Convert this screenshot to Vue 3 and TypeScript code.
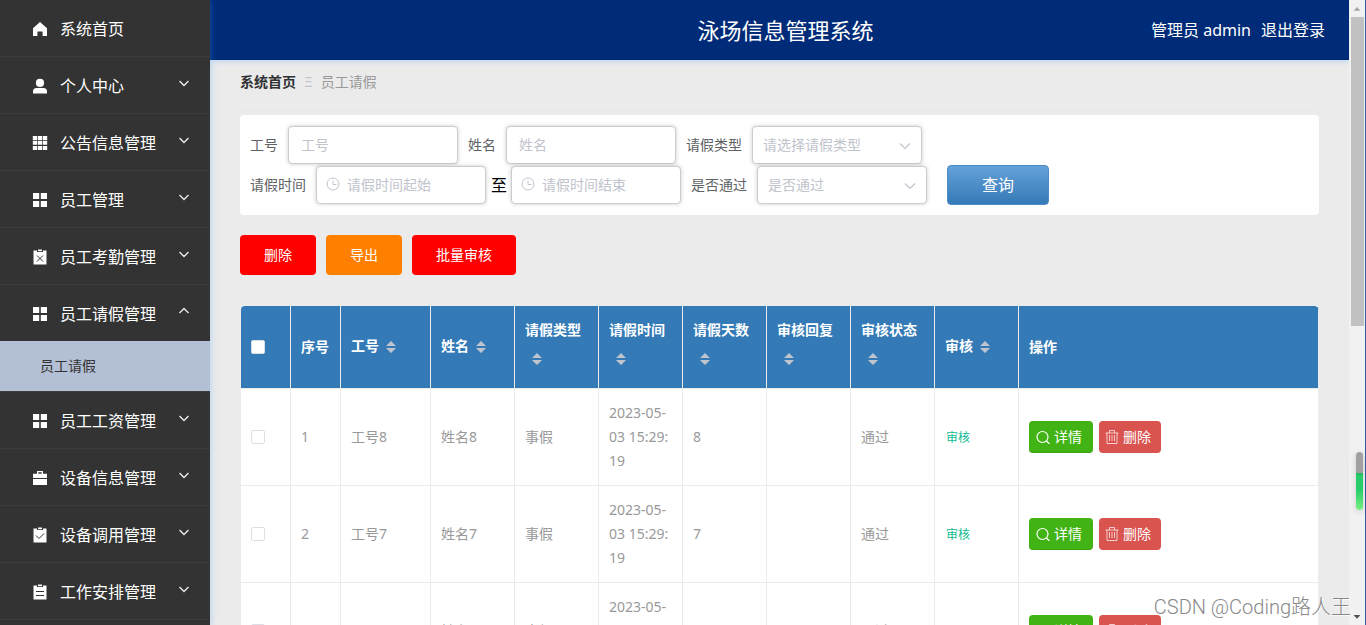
<script setup lang="ts">
import { ref } from 'vue'

type IconName = 'home' | 'user' | 'grid9' | 'grid4' | 'claim' | 'case' | 'checked' | 'order'

interface MenuItem {
  title: string
  icon: IconName
  expandable: boolean
  children?: string[]
}

interface Column {
  label: string
  width: number
}

interface Leave {
  no: string
  name: string
  type: string
  time: string
  days: string
  reply: string
  status: string
}

const menu: MenuItem[] = [
  { title: '系统首页', icon: 'home', expandable: false },
  { title: '个人中心', icon: 'user', expandable: true },
  { title: '公告信息管理', icon: 'grid9', expandable: true },
  { title: '员工管理', icon: 'grid4', expandable: true },
  { title: '员工考勤管理', icon: 'claim', expandable: true },
  { title: '员工请假管理', icon: 'grid4', expandable: true, children: ['员工请假'] },
  { title: '员工工资管理', icon: 'grid4', expandable: true },
  { title: '设备信息管理', icon: 'case', expandable: true },
  { title: '设备调用管理', icon: 'checked', expandable: true },
  { title: '工作安排管理', icon: 'order', expandable: true }
]

const icons: Record<IconName, string> = {
  home: 'M8 1 15 7.2V15h-4.4v-4.6H5.4V15H1V7.2z',
  user: 'M8 .8a4.100 4.100 0 1 1 0 8.200A4.100 4.100 0 0 1 8 .8zM4.500 10h7A3.500 3.500 0 0 1 15 13.500V15.500H1v-2A3.500 3.500 0 0 1 4.500 10z',
  grid9: 'M.8 1h4.400v4H.8zM5.900 1h4.200v4H5.900zM10.800 1h4.400v4h-4.400zM.8 5.700h4.400v4H.8zM5.900 5.700h4.200v4H5.900zM10.800 5.700h4.400v4h-4.400zM.8 10.900h4.400v4.100H.8zM5.900 10.900h4.200v4.100H5.900zM10.800 10.900h4.400v4.100h-4.400z',
  grid4: 'M1 1h6.200v6H1zM8.800 1H15v6H8.800zM1 9h6.200v6H1zM8.800 9H15v6H8.800z',
  claim: 'M1.500 1.500H5V3h6V1.500h3.500v14h-13zM6 .5h4v1.800H6z',
  case: 'M5 3.800V1h6v2.800h4V8H1V3.800zM6.300 2.200v1.600h3.400V2.200zM1 9h14v6H1z',
  checked: 'M1.500 1.500H5V3h6V1.500h3.500v14h-13zM6 .5h4v1.800H6z',
  order: 'M1.500 1.500H5V3h6V1.500h3.500v14h-13zM6 .5h4v1.800H6z'
}

const marks: Partial<Record<IconName, string>> = {
  claim: 'M5 6.500l6 6M11 6.500l-6 6',
  checked: 'M4 8.500l3 3L12 6.500',
  order: 'M4 7.500h8M4 11.500h8'
}

const columns: Column[] = [
  { label: '工号', width: 90 },
  { label: '姓名', width: 84 },
  { label: '请假类型', width: 84 },
  { label: '请假时间', width: 84 },
  { label: '请假天数', width: 84 },
  { label: '审核回复', width: 84 },
  { label: '审核状态', width: 84 },
  { label: '审核', width: 84 }
]

const rows: Leave[] = ['8', '7', '6'].map((n) => ({
  no: '工号' + n,
  name: '姓名' + n,
  type: '事假',
  time: '2023-05-03 15:29:19',
  days: n,
  reply: '',
  status: '通过'
}))

const jobNo = ref('')
const staffName = ref('')
const startTime = ref('')
const endTime = ref('')
const leaveType = ref('')
const passed = ref('')
</script>

<template>
  <div class="app">
    <nav class="sidebar">
      <ul class="menu">
        <li v-for="item in menu" :key="item.title" class="menu-item">
          <a href="#" class="menu-title">
            <svg class="menu-icon" viewBox="0 0 16 16">
              <path :d="icons[item.icon]" fill="#fff" fill-rule="evenodd" />
              <path v-if="marks[item.icon]" :d="marks[item.icon]" fill="none" stroke="#333" />
            </svg>
            <span class="menu-text">{{ item.title }}</span>
            <svg v-if="item.expandable" class="arrow" :class="{ open: item.children }" viewBox="0 0 12 12">
              <path d="M1.500 4 6 8.500l4.500-4.500" fill="none" stroke="#eee" stroke-width="1.300" />
            </svg>
          </a>
          <a v-for="child in item.children" :key="child" href="#" class="submenu">{{ child }}</a>
        </li>
      </ul>
    </nav>

    <div class="page">
      <header class="header">
        <h1>泳场信息管理系统</h1>
        <div class="account">
          <span>管理员 admin</span>
          <a href="#">退出登录</a>
        </div>
      </header>

      <main class="content">
        <div class="crumbs">
          <a href="#">系统首页</a>
          <span class="sep">Ξ</span>
          <span>员工请假</span>
        </div>

        <form class="search" @submit.prevent>
          <div class="field">
            <label for="job-no">工号</label>
            <input id="job-no" v-model="jobNo" class="box" type="text" placeholder="工号" />
          </div>
          <div class="field">
            <label for="staff-name">姓名</label>
            <input id="staff-name" v-model="staffName" class="box" type="text" placeholder="姓名" />
          </div>
          <div class="field">
            <label for="leave-type">请假类型</label>
            <div class="control">
              <select id="leave-type" v-model="leaveType" class="box">
                <option value="">请选择请假类型</option>
              </select>
              <svg class="caret" viewBox="0 0 12 12"><path d="M1 3.500 6 8.500l5-5" fill="none" stroke="#c0c4cc" stroke-width="1.200" /></svg>
            </div>
          </div>
          <div class="field">
            <label for="start-time">请假时间</label>
            <div class="range">
              <div class="control">
                <svg class="clock" viewBox="0 0 14 14"><path d="M7 1a6 6 0 1 1 0 12A6 6 0 0 1 7 1zM7 3.500V7.500h3.500" fill="none" stroke="#c0c4cc" /></svg>
                <input id="start-time" v-model="startTime" class="box dated" type="text" placeholder="请假时间起始" />
              </div>
              <span class="to">至</span>
              <div class="control">
                <svg class="clock" viewBox="0 0 14 14"><path d="M7 1a6 6 0 1 1 0 12A6 6 0 0 1 7 1zM7 3.500V7.500h3.500" fill="none" stroke="#c0c4cc" /></svg>
                <input v-model="endTime" class="box dated" type="text" placeholder="请假时间结束" aria-label="请假时间结束" />
              </div>
            </div>
          </div>
          <div class="field">
            <label for="passed">是否通过</label>
            <div class="control">
              <select id="passed" v-model="passed" class="box">
                <option value="">是否通过</option>
              </select>
              <svg class="caret" viewBox="0 0 12 12"><path d="M1 3.500 6 8.500l5-5" fill="none" stroke="#c0c4cc" stroke-width="1.200" /></svg>
            </div>
          </div>
          <button class="query" type="submit">查询</button>
        </form>

        <div class="actions">
          <button type="button" class="action red">删除</button>
          <button type="button" class="action orange">导出</button>
          <button type="button" class="action red">批量审核</button>
        </div>

        <table class="table">
          <colgroup>
            <col class="narrow" />
            <col class="narrow" />
            <col v-for="c in columns" :key="c.label" :style="{ width: c.width + 'px' }" />
            <col />
          </colgroup>
          <thead>
            <tr>
              <th><input type="checkbox" class="check" aria-label="全选" /></th>
              <th>序号</th>
              <th v-for="c in columns" :key="c.label">
                <span class="label">{{ c.label }}</span>
                <span class="sort">
                  <svg viewBox="0 0 10 12"><path d="M5 0l5 5H0zM0 7h10l-5 5z" fill="#c0c4cc" /></svg>
                </span>
              </th>
              <th>操作</th>
            </tr>
          </thead>
          <tbody>
            <tr v-for="(r, i) in rows" :key="r.no">
              <td><input type="checkbox" class="check" :aria-label="r.no" /></td>
              <td>{{ i + 1 }}</td>
              <td>{{ r.no }}</td>
              <td>{{ r.name }}</td>
              <td>{{ r.type }}</td>
              <td>{{ r.time }}</td>
              <td>{{ r.days }}</td>
              <td>{{ r.reply }}</td>
              <td>{{ r.status }}</td>
              <td><button type="button" class="audit">审核</button></td>
              <td>
                <div class="ops">
                  <button type="button" class="op detail">
                    <svg viewBox="0 0 14 14"><path d="M6.500 1.500a5.500 5.500 0 1 1 0 11a5.500 5.500 0 0 1 0-11zM10.500 11 13.500 14" fill="none" stroke="#fff" stroke-width="1.200" /></svg>
                    <span>详情</span>
                  </button>
                  <button type="button" class="op remove">
                    <svg viewBox="0 0 14 14"><path d="M.5 3h13M4.500 3V.5h5V3M2 3v10.500h10V3M4.500 5v6M7 5v6M9.500 5v6" fill="none" stroke="#fff" stroke-opacity=".7" /></svg>
                    <span>删除</span>
                  </button>
                </div>
              </td>
            </tr>
          </tbody>
        </table>
      </main>
    </div>

    <div class="scrollbar">
      <svg viewBox="0 0 17 17"><path d="M5 11l3.500-4L12 11z" fill="#a3a3a3" /></svg>
      <div class="thumb"></div>
      <svg class="down" viewBox="0 0 17 17"><path d="M5 7h7l-3.500 4z" fill="#505050" /></svg>
    </div>
    <div class="meter"></div>
    <div class="watermark">CSDN @Coding路人王</div>
  </div>
</template>

<style>
body {
  margin: 0;
}
</style>

<style scoped>
* {
  box-sizing: border-box;
}

.app {
  position: relative;
  display: flex;
  height: 100vh;
  overflow: hidden;
  background: #ebebeb;
  color: #000;
  font-family: "Noto Sans", "Noto Sans CJK SC", sans-serif;
  font-size: 14px;
}

a {
  color: inherit;
  text-decoration: none;
}

button,
input,
select {
  font: inherit;
}

button {
  border: 0;
  cursor: pointer;
}

.sidebar {
  z-index: 1;
  flex: 0 0 210px;
  background: #333;
  color: #fff;
  box-shadow: 1px 0 6px rgba(64, 158, 255, 0.3);
}

.menu {
  margin: 0;
  padding: 0;
  list-style: none;
}

.menu-item {
  border-bottom: 1px solid #3d3d3d;
}

.menu-title {
  display: flex;
  align-items: center;
  height: 56px;
  padding: 2px 20px 0 32px;
  font-size: 16px;
}

.menu-icon {
  width: 16px;
  height: 16px;
  margin-right: 12px;
}

.menu-text {
  padding-bottom: 2px;
}

.arrow {
  width: 12px;
  height: 12px;
  margin: 0 0 6px auto;
}

.arrow.open {
  transform: rotate(180deg);
}

.submenu {
  display: block;
  padding-left: 40px;
  background: #b3bfd4;
  color: #333;
  line-height: 50px;
}

.page {
  display: flex;
  flex: 1;
  flex-direction: column;
  min-width: 0;
}

.header {
  display: grid;
  flex: none;
  grid-template-columns: 1fr auto 1fr;
  align-items: center;
  height: 60px;
  padding: 0 24px 2px 36px;
  background: #002b78;
  color: #fff;
  font-size: 16px;
  box-shadow: 0 1px 6px rgba(64, 158, 255, 0.3);
}

.header h1 {
  grid-column: 2;
  margin: 0;
  font-size: 22px;
  font-weight: 400;
}

.account {
  display: flex;
  gap: 10px;
  justify-content: flex-end;
}

.content {
  flex: 1;
  min-height: 0;
  padding: 0 30px;
}

.crumbs {
  display: flex;
  gap: 8px;
  height: 45px;
  border-bottom: 1px solid #eee;
  color: #999;
  line-height: 44px;
}

.crumbs a {
  color: #303133;
  font-weight: 700;
}

.sep {
  color: #c0c4cc;
}

.search {
  display: flex;
  flex-wrap: wrap;
  column-gap: 10px;
  margin-top: 10px;
  padding: 10px;
  border-radius: 4px;
  background: #fff;
}

.field {
  display: flex;
  gap: 10px;
  align-items: center;
  height: 40px;
  color: #606266;
}

.field label {
  padding-bottom: 2px;
}

.range {
  display: flex;
  align-items: center;
}

.to {
  padding: 0 4px 2px 5px;
  color: #000;
  font-size: 16px;
}

.control {
  position: relative;
}

.box {
  display: block;
  width: 170px;
  height: 38px;
  padding: 0 12px 2px;
  border: 1px solid #ccc;
  border-radius: 4px;
  outline: none;
  background: #fff;
  box-shadow: 0 0 4px rgba(0, 0, 0, 0.2);
  color: #606266;
  appearance: none;
}

select.box {
  padding: 0 10px 2px;
  color: #c0c4cc;
}

.box.dated {
  padding-left: 30px;
}

.box::placeholder {
  color: #c0c4cc;
  opacity: 1;
}

.caret {
  position: absolute;
  top: 14px;
  right: 11px;
  width: 12px;
  height: 12px;
  pointer-events: none;
}

.clock {
  position: absolute;
  top: 11px;
  left: 10px;
  width: 14px;
  height: 14px;
}

.query {
  width: 102px;
  height: 40px;
  margin-left: 10px;
  padding: 0 0 2px;
  border: 1px solid #4a8bc8;
  border-radius: 4px;
  background: linear-gradient(#66a1d8, #337ab7);
  color: #fff;
  font-size: 16px;
}

.actions {
  display: flex;
  gap: 10px;
  margin: 20px 0 30px;
}

.action {
  height: 40px;
  padding: 0 24px 2px;
  border-radius: 4px;
  color: #fff;
}

.red {
  background: #f00;
}

.orange {
  background: #ff8000;
}

.table {
  width: 100%;
  overflow: hidden;
  border: 1px solid #ebebeb;
  border-width: 1px 0 0 1px;
  border-radius: 5px;
  border-spacing: 0;
  table-layout: fixed;
  background: #fff;
  color: #999;
  line-height: 24px;
  word-break: break-all;
}

.narrow {
  width: 50px;
}

th,
td {
  padding: 12px 10px;
  border: 1px solid #ebebeb;
  border-width: 0 1px 1px 0;
  text-align: left;
  vertical-align: middle;
}

th {
  height: 83px;
  background: #337ab7;
  color: #fff;
}

.label {
  display: inline-block;
}

.sort {
  display: inline-flex;
  align-items: center;
  justify-content: center;
  width: 24px;
  height: 34px;
  vertical-align: middle;
}

.sort svg {
  width: 10px;
  height: 12px;
}

.check {
  display: block;
  width: 14px;
  height: 14px;
  margin: 0;
  border: 1px solid #dcdfe6;
  border-radius: 2px;
  background: #fff;
  appearance: none;
}

.audit {
  padding: 0 1px;
  background: none;
  color: #11bb91;
  font-size: 12px;
}

.ops {
  display: flex;
  gap: 6px;
}

.op {
  display: flex;
  gap: 4px;
  align-items: center;
  height: 32px;
  padding: 0 10px 0 7px;
  border-radius: 4px;
  color: #fff;
}

.op svg {
  width: 14px;
  height: 14px;
}

.detail {
  padding-right: 11px;
  border: 1px solid #3ba510;
  border-width: 0 0 1px;
  background: #41b314;
}

.remove {
  padding-left: 6px;
  background: #d9534f;
}

.scrollbar {
  display: flex;
  flex: 0 0 17px;
  flex-direction: column;
  border-right: 1px solid #2f5c9e;
  background: #f1f1f1;
}

.scrollbar svg {
  width: 16px;
  height: 17px;
}

.thumb {
  height: 309px;
  margin: 0 1px 0 2px;
  background: #c1c1c1;
}

.scrollbar .down {
  margin-top: auto;
}

.meter {
  position: absolute;
  top: 452px;
  right: 3px;
  width: 7px;
  height: 58px;
  border-radius: 4px;
  background: linear-gradient(#a0a0a0 36%, #20b45c 36%, #28cc6a 42%, #28cc6a 65%, #78f080);
  box-shadow: 0 2px 6px rgba(0, 0, 0, 0.15);
}

.watermark {
  position: absolute;
  right: 15px;
  bottom: 5px;
  color: #888;
  font-family: Roboto, "Noto Sans CJK SC", sans-serif;
  font-size: 20px;
  font-weight: 300;
  text-shadow: 1px 1px 1px #fff;
}
</style>
